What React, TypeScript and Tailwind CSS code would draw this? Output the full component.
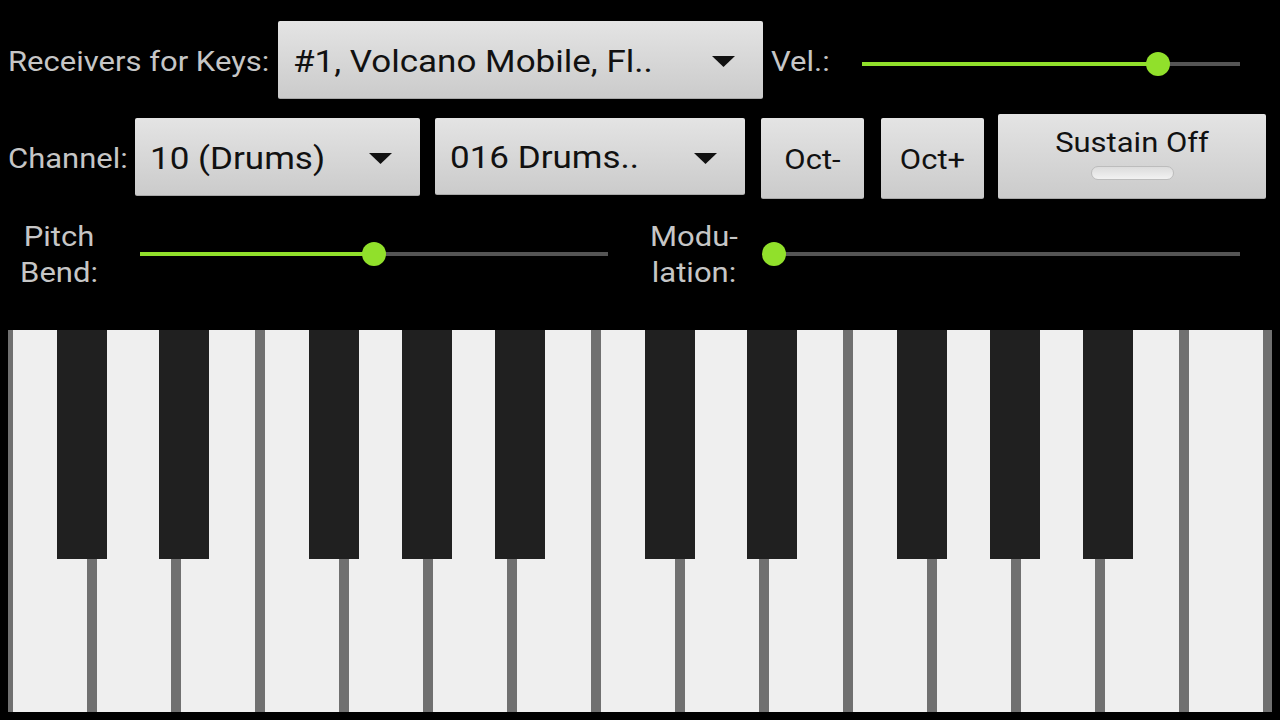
const font = { fontFamily: "Roboto, 'Liberation Sans', sans-serif" };

function Arrow() {
  return (
    <svg width="23" height="11" viewBox="0 0 23 11" className="shrink-0">
      <polygon points="0,0 23,0 11.5,11" fill="#111111" />
    </svg>
  );
}

function Spinner({ text, w, h, mt }: { text: string; w: string; h: string; mt?: string }) {
  return (
    <div
      className={`${w} ${h} ${mt ?? ""} flex items-center justify-between pl-[15px] pr-[28px] rounded-[2px] bg-gradient-to-b from-[#e4e4e4] to-[#cbcbcb] border-b border-[#a8a8a8] text-[#111111] text-[35px] shrink-0`}
    >
      <span className="whitespace-nowrap leading-none pt-[3px] scale-y-90 origin-left">{text}</span>
      <span className="pt-[4px]">
        <Arrow />
      </span>
    </div>
  );
}

function Slider({ w, fill }: { w: string; fill: string }) {
  return (
    <div className={`${w} h-[26px] flex items-center shrink-0`}>
      <div className={`${fill} h-[4px] bg-[#91e02b]`} />
      <div className="w-[24px] h-[24px] rounded-full bg-[#91e02b] -mx-[12px] z-10 shrink-0" />
      <div className="flex-1 h-[4px] bg-[#555555]" />
    </div>
  );
}

const btn =
  "rounded-[2px] bg-gradient-to-b from-[#e4e4e4] to-[#cbcbcb] border-b border-[#a8a8a8] text-[#111111] text-[31px]";

const blackKeys = [49, 151, 301, 394, 487, 637, 739, 889, 982, 1075];

export default function App() {
  return (
    <div className="w-[1280px] h-[720px] bg-black overflow-hidden text-[#c6c6c6]" style={font}>
      {/* row 1 */}
      <div className="flex items-center pt-[21px] pl-[8px] h-[99px]">
        <div className="w-[270px] text-[31px] whitespace-nowrap pt-[5px] scale-y-90 origin-left">Receivers for Keys:</div>
        <Spinner text="#1, Volcano Mobile, Fl.." w="w-[485px]" h="h-[78px]" />
        <div className="w-[99px] pl-[8px] text-[31px] pt-[5px] scale-y-90">Vel.:</div>
        <div className="mt-[8px]">
          <Slider w="w-[378px]" fill="w-[296px]" />
        </div>
      </div>

      {/* row 2 */}
      <div className="flex items-start pl-[8px] mt-[15px] h-[85px]">
        <div className="w-[119px] h-[85px] flex items-center text-[31px] pt-[6px] scale-y-90">Channel:</div>
        <Spinner text="10 (Drums)" w="w-[285px]" h="h-[78px]" mt="mt-[4px] ml-[8px]" />
        <Spinner text="016 Drums.." w="w-[310px]" h="h-[77px]" mt="mt-[4px] ml-[15px]" />
        <div className={`ml-[16px] mt-[4px] w-[103px] h-[81px] flex items-center justify-center pt-[4px] ${btn}`}>
          <span className="scale-y-90">Oct-</span>
        </div>
        <div className={`ml-[17px] mt-[4px] w-[103px] h-[81px] flex items-center justify-center pt-[4px] ${btn}`}>
          <span className="scale-y-90">Oct+</span>
        </div>
        <div className={`ml-[14px] w-[268px] h-[85px] flex flex-col items-center pt-[12px] ${btn}`}>
          <span className="leading-[34px] scale-y-90">Sustain Off</span>
          <div className="mt-[6px] w-[83px] h-[14px] rounded-full bg-gradient-to-b from-[#dcdcdc] to-[#f2f2f2] border border-[#bcbcbc]" />
        </div>
      </div>

      {/* row 3 */}
      <div className="flex items-center h-[131px] pb-[22px]">
        <div className="ml-[8px] w-[102px] text-center text-[31px] leading-[40px] pt-[2px] scale-y-90">
          <div>Pitch</div>
          <div>Bend:</div>
        </div>
        <div className="ml-[30px]">
          <Slider w="w-[468px]" fill="w-[234px]" />
        </div>
        <div className="ml-[33px] w-[106px] text-center text-[31px] leading-[40px] pt-[2px] scale-y-90">
          <div>Modu-</div>
          <div>lation:</div>
        </div>
        <div className="ml-[27px]">
          <Slider w="w-[466px]" fill="w-[0px]" />
        </div>
      </div>

      {/* keyboard */}
      <div className="ml-[8px] w-[1264px] h-[382px] bg-[#707070] relative flex">
        {Array.from({ length: 15 }).map((_, i) => (
          <div key={i} className="w-[84px] h-full border-x-[5px] border-[#707070] bg-[#efefef] shrink-0" />
        ))}
        {blackKeys.map((x) => (
          <div key={x} className="absolute top-0 w-[50px] h-[229px] bg-[#202020]" style={{ left: x }} />
        ))}
      </div>
    </div>
  );
}
